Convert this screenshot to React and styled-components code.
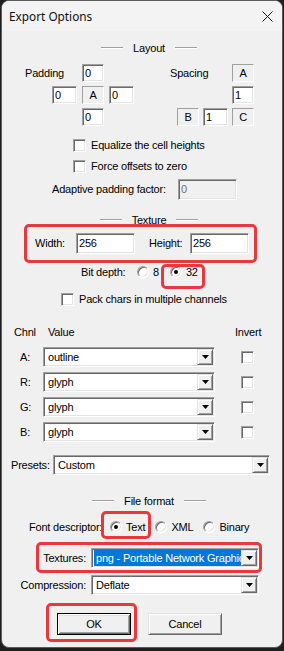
import React from "react";
import styled, { createGlobalStyle, css } from "styled-components";

const Global = createGlobalStyle`
  html, body { margin: 0; padding: 0; }
  body {
    background: #1f1f1f;
    width: 284px;
    height: 651px;
    overflow: hidden;
  }
`;

const sunken = css`
  border: 1px solid;
  border-color: #a0a0a0 #ffffff #ffffff #a0a0a0;
  box-shadow: inset 1px 1px 0 #696969, inset -1px -1px 0 #e3e3e3;
`;

const raised = css`
  border: 1px solid;
  border-color: #e3e3e3 #696969 #696969 #e3e3e3;
  box-shadow: inset 1px 1px 0 #ffffff, inset -1px -1px 0 #a0a0a0;
`;

const Window = styled.div`
  margin: 0 1px;
  width: 282px;
  height: 648px;
  box-sizing: border-box;
  border: 1px solid #5b5b5b;
  border-radius: 8px;
  background: #f0f0f0;
  overflow: hidden;
  display: flex;
  flex-direction: column;
`;

const TitleBar = styled.div`
  height: 30px;
  flex: none;
  display: flex;
  align-items: center;
  justify-content: space-between;
  padding: 0 9px 0 7px;
  background: #f3f3f3;
`;

const Title = styled.span`
  font-family: "Segoe UI", "Noto Sans", sans-serif;
  font-size: 11.8px;
  color: #111;
`;

const Body = styled.div`
  display: flex;
  flex-direction: column;
  font-family: "Liberation Sans", Arial, sans-serif;
  font-size: 11px;
  letter-spacing: -0.2px;
  line-height: 13px;
  color: #000;
`;

const HeaderRow = styled.div`
  display: flex;
  align-items: center;
  justify-content: center;
  gap: 10px;
  height: 14px;
  padding-left: 14px;
  margin-top: ${(p) => p.$mt}px;
`;

const Rule = styled.span`
  width: 22px;
  height: 2px;
  box-sizing: border-box;
  border-top: 1px solid #a0a0a0;
  border-bottom: 1px solid #ffffff;
`;

const GroupHeader = ({ mt, children }) => (
  <HeaderRow $mt={mt}>
    <Rule />
    <span>{children}</span>
    <Rule />
  </HeaderRow>
);

const Edit = styled.div`
  ${sunken};
  box-sizing: border-box;
  width: ${(p) => p.$w}px;
  height: ${(p) => p.$h || 18}px;
  background: ${(p) => (p.$disabled ? "#f0f0f0" : "#ffffff")};
  color: ${(p) => (p.$disabled ? "#6d6d6d" : "#000")};
  display: flex;
  align-items: center;
  padding-left: 2px;
  justify-self: center;
`;

const LabelBox = styled.div`
  box-sizing: border-box;
  width: 22px;
  height: 18px;
  border: 1px solid;
  border-color: #a0a0a0 #ffffff #ffffff #a0a0a0;
  display: flex;
  align-items: center;
  justify-content: center;
`;

const LayoutRow = styled.div`
  display: flex;
  margin-top: ${(p) => p.$mt}px;
`;

const PaddingGrid = styled.div`
  display: grid;
  grid-template-columns: 22px 25px 22px 25px;
  grid-auto-rows: 18px;
  column-gap: 5px;
  row-gap: 4px;
  margin-left: 23px;
`;

const SpacingGrid = styled.div`
  display: grid;
  grid-template-columns: 22px 25px 22px;
  grid-auto-rows: 18px;
  column-gap: 4px;
  row-gap: 4px;
  margin-left: auto;
  margin-right: 28px;
`;

const Cell = styled.div`
  grid-column: ${(p) => p.$col};
  grid-row: ${(p) => p.$row};
  display: flex;
  align-items: center;
  justify-content: ${(p) => (p.$start ? "flex-start" : "center")};
  margin-left: ${(p) => p.$ml || 0}px;
`;

const CheckBox = styled.span`
  ${sunken};
  box-sizing: border-box;
  width: 13px;
  height: 13px;
  background: #fff;
  flex: none;
`;

const CheckRow = styled.div`
  display: flex;
  align-items: center;
  gap: 5px;
  height: 13px;
  padding-left: ${(p) => p.$pl}px;
  margin-top: ${(p) => p.$mt}px;
`;

const FieldRow = styled.div`
  display: flex;
  align-items: center;
  height: ${(p) => p.$h || 14}px;
  padding-left: ${(p) => p.$pl}px;
  margin-top: ${(p) => p.$mt}px;
`;

const FieldLabel = styled.span`
  width: ${(p) => p.$w}px;
  flex: none;
  text-align: ${(p) => (p.$right ? "right" : "left")};
  padding-right: ${(p) => (p.$right ? 5 : 0)}px;
  box-sizing: border-box;
  white-space: nowrap;
`;

const Spacer = styled.span`
  width: ${(p) => p.$w}px;
  flex: none;
`;

const Highlight = styled.div`
  position: relative;
  display: flex;
  align-items: center;
  gap: ${(p) => p.$gap || 0}px;
  &::after {
    content: "";
    position: absolute;
    top: ${(p) => p.$t}px;
    right: ${(p) => p.$r}px;
    bottom: ${(p) => p.$b}px;
    left: ${(p) => p.$l}px;
    border: 3px solid #e8383d;
    border-radius: 5px;
    pointer-events: none;
  }
`;

const RadioDot = styled.span`
  position: relative;
  box-sizing: border-box;
  width: 12px;
  height: 12px;
  border-radius: 50%;
  background: #fff;
  border: 1px solid;
  border-color: #a0a0a0 #ffffff #ffffff #a0a0a0;
  box-shadow: inset 1px 1px 0 #696969, inset -1px -1px 0 #e3e3e3;
  flex: none;
  &::after {
    content: "";
    display: ${(p) => (p.$checked ? "block" : "none")};
    position: absolute;
    left: 3px;
    top: 3px;
    width: 4px;
    height: 4px;
    border-radius: 50%;
    background: #000;
  }
`;

const OptionWrap = styled.span`
  display: flex;
  align-items: center;
  gap: 4px;
`;

const Radio = ({ checked, children }) => (
  <OptionWrap>
    <RadioDot $checked={checked} />
    <span>{children}</span>
  </OptionWrap>
);

const OptionGroup = styled.div`
  display: flex;
  align-items: center;
  gap: ${(p) => p.$gap}px;
`;

const ChannelGrid = styled.div`
  display: grid;
  grid-template-columns: 29px 172px 1fr;
  grid-auto-rows: ${(p) => p.$rowH}px;
  row-gap: 5px;
  padding-left: 12px;
  margin-top: ${(p) => p.$mt}px;
`;

const ChanCell = styled.div`
  display: flex;
  align-items: center;
  padding-left: ${(p) => p.$pl || 0}px;
`;

const ComboBox = styled.div`
  ${sunken};
  box-sizing: border-box;
  width: ${(p) => p.$w}px;
  height: 20px;
  padding: 1px;
  background: #fff;
  display: flex;
  align-items: center;
  flex: none;
`;

const ComboText = styled.div`
  flex: 1;
  min-width: 0;
  height: 16px;
  display: flex;
  align-items: center;
  overflow: hidden;
  white-space: nowrap;
  padding-left: ${(p) => (p.$selected ? 1 : 3)}px;
`;

const Selected = styled.span`
  flex: 1;
  height: 16px;
  display: flex;
  align-items: center;
  padding-left: 2px;
  background: #0078d7;
  color: #fff;
  overflow: hidden;
`;

const DropButton = styled.div`
  ${raised};
  box-sizing: border-box;
  width: 16px;
  height: 16px;
  background: #f0f0f0;
  display: flex;
  align-items: center;
  justify-content: center;
  flex: none;
`;

const Arrow = () => (
  <svg width="7" height="4" viewBox="0 0 7 4">
    <path d="M0 0h7L3.5 4z" fill="#000" />
  </svg>
);

const Combo = ({ w, selected, children }) => (
  <ComboBox $w={w}>
    <ComboText $selected={selected}>
      {selected ? <Selected>{children}</Selected> : children}
    </ComboText>
    <DropButton>
      <Arrow />
    </DropButton>
  </ComboBox>
);

const ButtonRow = styled.div`
  display: flex;
  gap: 17px;
  padding-left: 55px;
  margin-top: ${(p) => p.$mt}px;
`;

const Button = styled.div`
  box-sizing: border-box;
  width: 74px;
  height: 22px;
  background: #f0f0f0;
  display: flex;
  align-items: center;
  justify-content: center;
  ${(p) =>
    p.$default
      ? css`
          border: 1px solid #000;
          box-shadow: inset 1px 1px 0 #fff, inset -1px -1px 0 #696969,
            inset 2px 2px 0 #e3e3e3, inset -2px -2px 0 #a0a0a0;
        `
      : raised}
`;

const CloseIcon = () => (
  <svg width="11" height="11" viewBox="0 0 11 11">
    <path d="M0.5 0.5L10.5 10.5M10.5 0.5L0.5 10.5" stroke="#1a1a1a" strokeWidth="1" />
  </svg>
);

const channels = [
  ["A:", "outline"],
  ["R:", "glyph"],
  ["G:", "glyph"],
  ["B:", "glyph"],
];

export default function App() {
  return (
    <>
      <Global />
      <Window>
        <TitleBar>
          <Title>Export Options</Title>
          <CloseIcon />
        </TitleBar>
        <Body>
          <GroupHeader mt={10}>Layout</GroupHeader>
          <LayoutRow $mt={9}>
            <PaddingGrid>
              <Cell $col="1 / 3" $row={1} $start>Padding</Cell>
              <Cell $col={3} $row={1}><Edit $w={25}>0</Edit></Cell>
              <Cell $col={2} $row={2}><Edit $w={25}>0</Edit></Cell>
              <Cell $col={3} $row={2}><LabelBox>A</LabelBox></Cell>
              <Cell $col={4} $row={2}><Edit $w={25}>0</Edit></Cell>
              <Cell $col={3} $row={3}><Edit $w={25}>0</Edit></Cell>
            </PaddingGrid>
            <SpacingGrid>
              <Cell $col="1 / 3" $row={1} $start $ml={-7}>Spacing</Cell>
              <Cell $col={3} $row={1}><LabelBox>A</LabelBox></Cell>
              <Cell $col={3} $row={2}><Edit $w={25}>1</Edit></Cell>
              <Cell $col={1} $row={3}><LabelBox>B</LabelBox></Cell>
              <Cell $col={2} $row={3}><Edit $w={25}>1</Edit></Cell>
              <Cell $col={3} $row={3}><LabelBox>C</LabelBox></Cell>
            </SpacingGrid>
          </LayoutRow>

          <CheckRow $pl={71} $mt={13}>
            <CheckBox />
            <span>Equalize the cell heights</span>
          </CheckRow>
          <CheckRow $pl={71} $mt={8}>
            <CheckBox />
            <span>Force offsets to zero</span>
          </CheckRow>

          <FieldRow $pl={50} $mt={6} $h={21}>
            <FieldLabel $w={126}>Adaptive padding factor:</FieldLabel>
            <Edit $w={59} $h={21} $disabled>0</Edit>
          </FieldRow>

          <GroupHeader mt={13}>Texture</GroupHeader>

          <FieldRow $pl={33} $mt={6} $h={21}>
            <Highlight $t={-9} $r={-8} $b={-9} $l={-11}>
              <FieldLabel $w={41}>Width:</FieldLabel>
              <Edit $w={59} $h={21}>256</Edit>
              <Spacer $w={14} />
              <FieldLabel $w={41}>Height:</FieldLabel>
              <Edit $w={59} $h={21}>256</Edit>
            </Highlight>
          </FieldRow>

          <FieldRow $pl={79} $mt={11}>
            <FieldLabel $w={56}>Bit depth:</FieldLabel>
            <OptionGroup $gap={11}>
              <Radio>8</Radio>
              <Highlight $t={-2} $r={-7} $b={-10} $l={-9}>
                <Radio checked>32</Radio>
              </Highlight>
            </OptionGroup>
          </FieldRow>

          <CheckRow $pl={59} $mt={14}>
            <CheckBox />
            <span>Pack chars in multiple channels</span>
          </CheckRow>

          <ChannelGrid $mt={19} $rowH={14}>
            <ChanCell>Chnl</ChanCell>
            <ChanCell $pl={5}>Value</ChanCell>
            <ChanCell $pl={20}>Invert</ChanCell>
          </ChannelGrid>
          <ChannelGrid $mt={8} $rowH={20}>
            {channels.map(([ch, val]) => (
              <React.Fragment key={ch}>
                <ChanCell $pl={6}>{ch}</ChanCell>
                <Combo w={172}>{val}</Combo>
                <ChanCell $pl={26}>
                  <CheckBox />
                </ChanCell>
              </React.Fragment>
            ))}
          </ChannelGrid>

          <FieldRow $pl={9} $mt={13} $h={20}>
            <FieldLabel $w={42}>Presets:</FieldLabel>
            <Combo w={217}>Custom</Combo>
          </FieldRow>

          <GroupHeader mt={19}>File format</GroupHeader>

          <FieldRow $pl={27} $mt={12}>
            <FieldLabel $w={81}>Font descriptor:</FieldLabel>
            <OptionGroup $gap={10}>
              <Highlight $t={-10} $r={-6} $b={-5} $l={-9}>
                <Radio checked>Text</Radio>
              </Highlight>
              <Radio>XML</Radio>
              <Radio>Binary</Radio>
            </OptionGroup>
          </FieldRow>

          <FieldRow $pl={18} $mt={14} $h={20}>
            <Highlight $t={-6} $r={-3} $b={-5} $l={16}>
              <FieldLabel $w={71} $right>Textures:</FieldLabel>
              <Combo w={168} selected>png - Portable Network Graphics</Combo>
            </Highlight>
          </FieldRow>
          <FieldRow $pl={18} $mt={7} $h={20}>
            <FieldLabel $w={71} $right>Compression:</FieldLabel>
            <Combo w={168}>Deflate</Combo>
          </FieldRow>

          <ButtonRow $mt={18}>
            <Highlight $t={-10} $r={-6} $b={-7} $l={-11}>
              <Button $default>OK</Button>
            </Highlight>
            <Button>Cancel</Button>
          </ButtonRow>
        </Body>
      </Window>
    </>
  );
}
